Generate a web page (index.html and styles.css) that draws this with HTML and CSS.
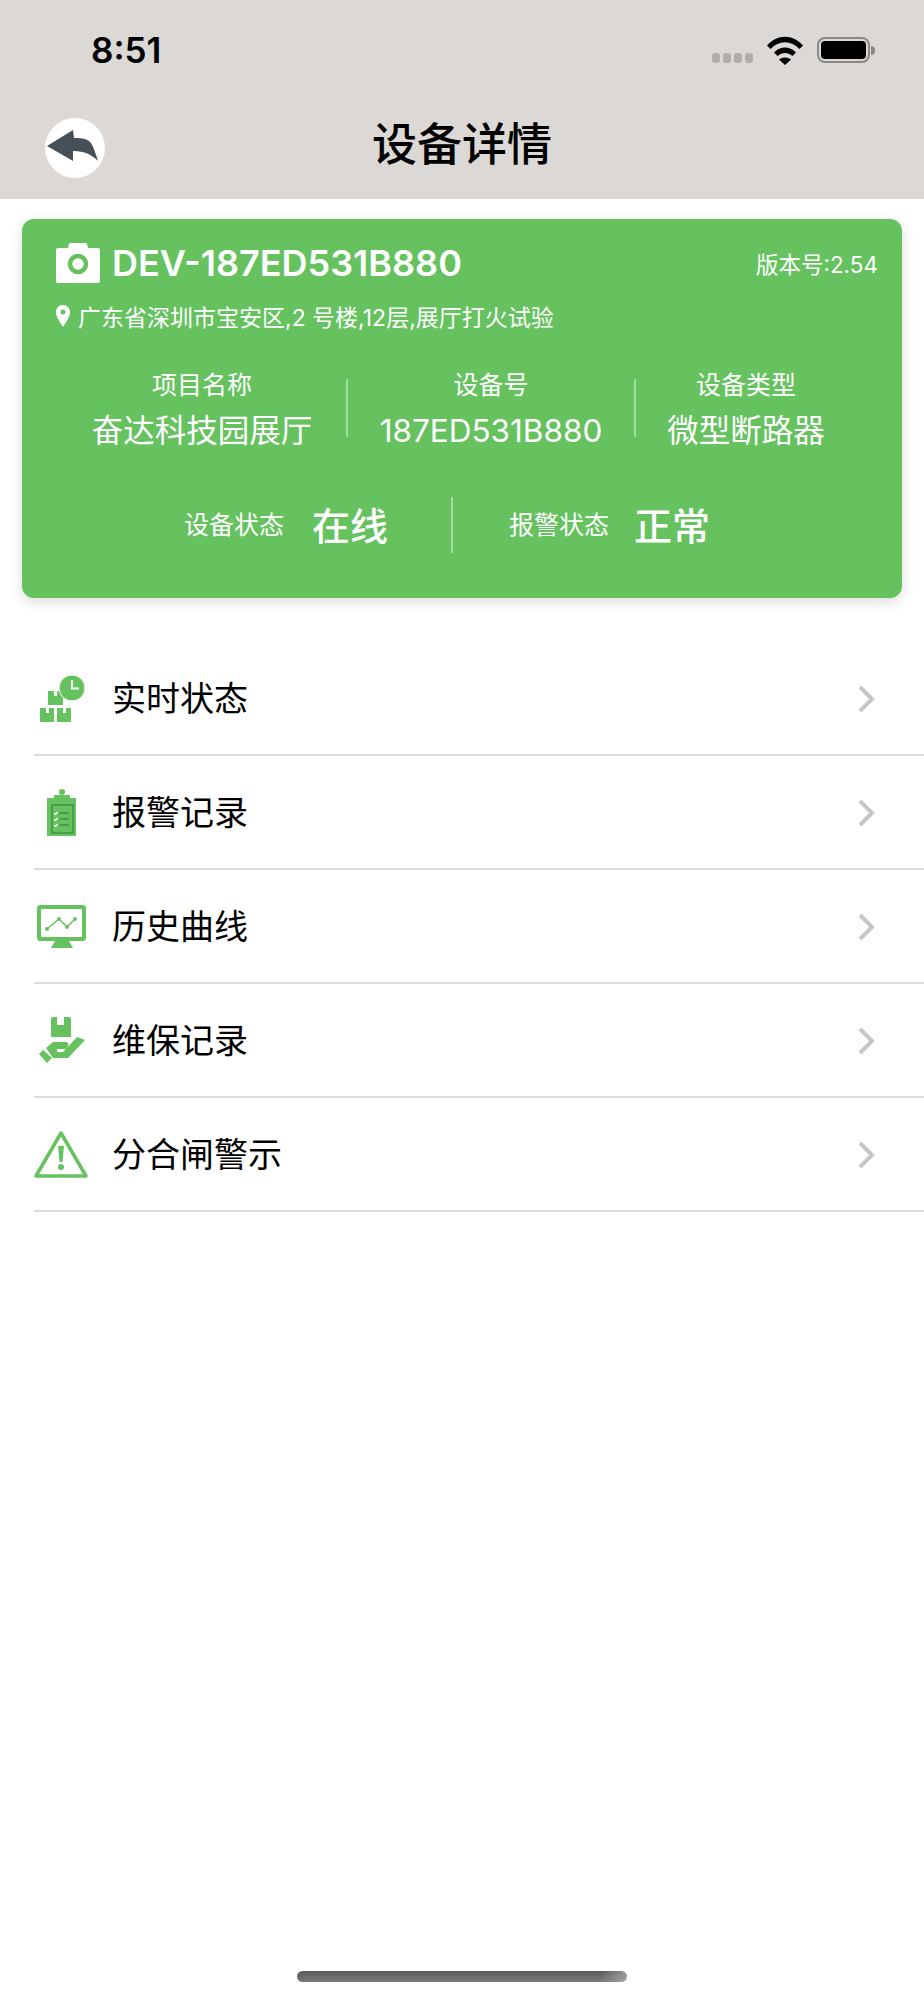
FILE: index.html
```html
<!DOCTYPE html>
<html lang="zh-CN">
<head>
    <meta charset="UTF-8">
    <meta name="viewport" content="width=device-width, initial-scale=1.0">
    <title>设备详情</title>
    <link rel="stylesheet" href="styles.css">
</head>
<body>
    <header class="top">
        <div class="status-bar">
            <span class="clock">8:51</span>
            <div class="status-icons">
                <div class="signal"><i></i><i></i><i></i><i></i></div>
                <svg class="wifi" width="36" height="29" viewBox="0 0 36 29">
                    <path d="M0 9.5C10-2.2 26-2.2 36 9.5l-3.6 3.6C24.300 4 11.700 4 3.600 13.100z"/>
                    <path d="M7 16.500c6.500-6.600 15.500-6.600 22 0l-3.600 3.600c-4.600-4.200-10.200-4.200-14.800 0z"/>
                    <path d="M12 23.500c3.600-2.800 8.400-2.800 12 0L18 29z"/>
                </svg>
                <div class="battery"><div class="battery-level"></div></div>
                <div class="battery-cap"></div>
            </div>
        </div>
        <nav class="nav-bar">
            <div class="back">
                <svg width="60" height="60" viewBox="0 0 60 60">
                    <path d="M2 28 28 12 29 20C38 20 43 21 46 25 49 30 51 37 53 43 47 37 40 33 28 33V43z" fill="#465059"/>
                </svg>
            </div>
            <h1>设备详情</h1>
        </nav>
    </header>

    <section class="card">
        <div class="card-head">
            <svg class="camera" width="44" height="40" viewBox="0 0 44 40">
                <path d="M2 5h10l1-4c.2-.6.600-1 1.200-1h15.600c.6 0 1 .4 1.200 1l1 4h10c1.200 0 2 .8 2 2v31c0 1.200-.8 2-2 2H2c-1.200 0-2-.8-2-2V7c0-1.200.8-2 2-2z" fill="#fff"/>
                <circle cx="22" cy="21" r="8" fill="none" stroke="#65c25f" stroke-width="4.500"/>
            </svg>
            <span class="device-name">DEV-187ED531B880</span>
            <span class="version">版本号:2.54</span>
        </div>
        <div class="address">
            <svg width="14" height="22" viewBox="0 0 14 22">
                <path d="M7 0c4 0 7 3 7 7 0 5-4 10-7 15C4 17 0 12 0 7c0-4 3-7 7-7z" fill="#fff"/>
                <circle cx="7" cy="7" r="2.500" fill="#65c25f"/>
            </svg>
            <span>广东省深圳市宝安区,2 号楼,12层,展厅打火试验</span>
        </div>
        <div class="info">
            <div class="info-col col-a">
                <span class="info-label">项目名称</span>
                <span class="info-value">奋达科技园展厅</span>
            </div>
            <div class="info-line"></div>
            <div class="info-col col-b">
                <span class="info-label">设备号</span>
                <span class="info-value">187ED531B880</span>
            </div>
            <div class="info-line"></div>
            <div class="info-col col-c">
                <span class="info-label">设备类型</span>
                <span class="info-value">微型断路器</span>
            </div>
        </div>
        <div class="states">
            <div class="state state-left">
                <span class="info-label">设备状态</span>
                <strong>在线</strong>
            </div>
            <div class="state state-right">
                <span class="info-label">报警状态</span>
                <strong>正常</strong>
            </div>
        </div>
    </section>

    <ul class="menu">
        <li class="menu-row">
            <svg class="menu-icon" viewBox="0 0 56 56">
                <path d="M7 38h6v5h3v-5h5v14H7zM24 38h6v5h3v-5h5v14H24zM15 21h6v5h3v-5h6v14H15z" fill="#65c25f"/>
                <circle cx="39" cy="18" r="13" fill="#65c25f" stroke="#fff" stroke-width="1"/>
                <path d="M39 10v8.500h7" fill="none" stroke="#fff" stroke-width="1.800"/>
            </svg>
            <span class="menu-text">实时状态</span>
            <svg class="chevron" width="18" height="28" viewBox="0 0 18 28"><path d="M3 2l12 12L3 26"/></svg>
        </li>
        <li class="menu-row">
            <svg class="menu-icon" viewBox="0 0 56 56">
                <circle cx="29" cy="8" r="3" fill="#65c25f"/>
                <path d="M21 11h16v3h6v38H14V14h7z" fill="#65c25f"/>
                <rect x="19" y="21" width="21" height="28" fill="none" stroke="#2f7a3a" stroke-width="1"/>
                <path d="M26 29h10M26 35h10M26 41h10" stroke="#2f7a3a" stroke-width="1.200"/>
                <path d="M21 29l1.500 1.500L25 28M21 35l1.500 1.500L25 34M21 41l1.500 1.500L25 40" fill="none" stroke="#fff" stroke-width="1.200"/>
            </svg>
            <span class="menu-text">报警记录</span>
            <svg class="chevron" width="18" height="28" viewBox="0 0 18 28"><path d="M3 2l12 12L3 26"/></svg>
        </li>
        <li class="menu-row">
            <svg class="menu-icon" viewBox="0 0 56 56">
                <rect x="6" y="9" width="45" height="32" rx="1.500" fill="none" stroke="#65c25f" stroke-width="4"/>
                <path d="M22 43h14l4 7H18z" fill="#65c25f"/>
                <path d="M14 31l12-10 8 8 8-8" fill="none" stroke="#65c25f" stroke-width="1.500"/>
                <circle cx="14" cy="31" r="2" fill="#65c25f"/>
                <circle cx="26" cy="21" r="2" fill="#65c25f"/>
                <circle cx="34" cy="29" r="2" fill="#65c25f"/>
                <circle cx="42" cy="21" r="2" fill="#65c25f"/>
            </svg>
            <span class="menu-text">历史曲线</span>
            <svg class="chevron" width="18" height="28" viewBox="0 0 18 28"><path d="M3 2l12 12L3 26"/></svg>
        </li>
        <li class="menu-row">
            <svg class="menu-icon" viewBox="0 0 56 56">
                <path d="M20 5h4v8h7V5h5c1.200 0 2 .8 2 2v18H18V7c0-1.200.8-2 2-2z" fill="#65c25f"/>
                <path d="M6 42l4-4 9 8-5 5z" fill="#65c25f"/>
                <path d="M13 36l7-6h13c2 0 3 2 2 4-1 2-1.500 3-3 3H24v3h6L44 25l8 3-17 18H20z" fill="#65c25f"/>
            </svg>
            <span class="menu-text">维保记录</span>
            <svg class="chevron" width="18" height="28" viewBox="0 0 18 28"><path d="M3 2l12 12L3 26"/></svg>
        </li>
        <li class="menu-row">
            <svg class="menu-icon" viewBox="0 0 56 56">
                <path d="M28 7 3 50h50z" fill="none" stroke="#65c25f" stroke-width="3.500" stroke-linejoin="round"/>
                <path d="M25 20h6l-1.500 16h-3z" fill="#65c25f"/>
                <circle cx="28" cy="41" r="3" fill="#65c25f"/>
            </svg>
            <span class="menu-text">分合闸警示</span>
            <svg class="chevron" width="18" height="28" viewBox="0 0 18 28"><path d="M3 2l12 12L3 26"/></svg>
        </li>
    </ul>

    <div class="home-bar"></div>
</body>
</html>
```

FILE: styles.css
```css
* {
    box-sizing: border-box;
}

body {
    margin: 0;
    height: 2000px;
    display: flex;
    flex-direction: column;
    background: #fff;
    color: #000;
    font-family: "Inter", "Noto Sans CJK SC", sans-serif;
    overflow: hidden;
}

.top {
    height: 199px;
    flex-shrink: 0;
    background: #dbd8d5;
}

.status-bar {
    height: 100px;
    display: flex;
    justify-content: space-between;
    padding: 31px 49px 0 91px;
}

.clock {
    font-size: 35px;
    font-weight: 600;
    line-height: 38px;
}

.status-icons {
    display: flex;
    align-items: flex-start;
}

.signal {
    display: flex;
    gap: 3px;
    margin-top: 22px;
    margin-right: 14px;
}

.signal i {
    width: 8px;
    height: 10px;
    border-radius: 3px;
    background: #b0adaa;
}

.wifi {
    margin-top: 5px;
    margin-right: 14px;
}

.battery {
    width: 53px;
    height: 26px;
    margin-top: 6px;
    padding: 2px;
    border: 2px solid #8b8986;
    border-radius: 8px;
}

.battery-level {
    height: 100%;
    background: #000;
    border-radius: 4px;
}

.battery-cap {
    width: 4px;
    height: 9px;
    margin-top: 15px;
    margin-left: 1px;
    background: #8b8986;
    border-radius: 0 4px 4px 0;
}

.nav-bar {
    height: 60px;
    margin-top: 18px;
    padding: 0 45px;
    display: grid;
    grid-template-columns: 1fr auto 1fr;
    grid-template-areas: "back title .";
    align-items: center;
}

.back {
    grid-area: back;
    width: 60px;
    height: 60px;
    border-radius: 50%;
    background: #fff;
}

.back svg {
    display: block;
}

.nav-bar h1 {
    grid-area: title;
    margin: -6px 0 0;
    font-size: 45px;
    font-weight: 500;
    line-height: 60px;
}

.card {
    width: 880px;
    height: 379px;
    flex-shrink: 0;
    margin: 20px 0 0 22px;
    padding: 24px 24px 0 34px;
    background: #65c25f;
    border-radius: 12px;
    box-shadow: 0 4px 14px rgba(0, 0, 0, 0.14);
    color: #fff;
}

.card-head {
    display: flex;
    align-items: center;
    height: 40px;
}

.device-name {
    margin-left: 12px;
    font-size: 36px;
    font-weight: 600;
}

.version {
    margin-left: auto;
    font-size: 22.5px;
}

.address {
    display: flex;
    align-items: center;
    gap: 8px;
    margin-top: 18px;
    height: 30px;
    font-size: 23px;
}

.info {
    display: flex;
    margin-top: 42px;
    margin-left: 2px;
}

.info-col {
    display: flex;
    flex-direction: column;
    align-items: center;
    gap: 13px;
}

.col-a {
    width: 288px;
}

.col-b {
    width: 286px;
}

.col-c {
    width: 220px;
}

.info-line {
    width: 2px;
    height: 58px;
    margin-top: 6px;
    background: #a4dca0;
}

.info-label {
    font-size: 25px;
    line-height: 25px;
    white-space: nowrap;
}

.info-value {
    font-size: 31.5px;
    line-height: 40px;
    white-space: nowrap;
}

.states {
    display: flex;
    margin-top: 46px;
    height: 56px;
}

.state {
    display: flex;
    align-items: center;
}

.state strong {
    font-size: 38px;
    font-weight: 500;
    margin-bottom: 3px;
}

.state-left {
    width: 397px;
    padding-left: 128px;
    gap: 28px;
    border-right: 2px solid #a4dca0;
}

.state-right {
    padding-left: 56px;
    gap: 25px;
}

.menu {
    list-style: none;
    margin: 44px 0 0;
    padding: 0 0 0 34px;
}

.menu-row {
    height: 114px;
    display: flex;
    align-items: center;
    gap: 23px;
    padding-right: 49px;
    border-bottom: 2px solid #dcdcdc;
}

.menu-icon {
    width: 56px;
    height: 56px;
    flex-shrink: 0;
    margin-left: -1px;
}

.menu-text {
    font-size: 34px;
    font-weight: 400;
    margin-bottom: 3px;
}

.chevron {
    margin-left: auto;
    margin-top: 1px;
}

.chevron path {
    fill: none;
    stroke: #c6c6c6;
    stroke-width: 4;
}

.home-bar {
    width: 330px;
    height: 11px;
    margin: auto 0 18px 297px;
    border-radius: 6px;
    background: linear-gradient(90deg, rgba(255, 255, 255, 0) 92%, rgba(255, 255, 255, 0.35)), linear-gradient(180deg, #5a5a5a, #7a7a7a);
}
```
